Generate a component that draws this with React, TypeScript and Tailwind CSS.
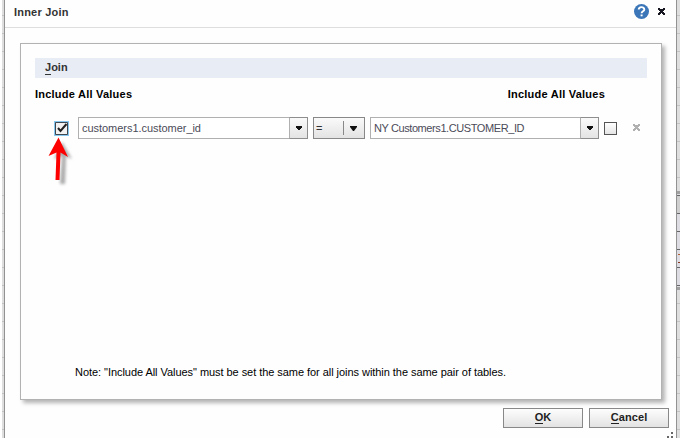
import React from "react";

const gridLines = "bg-[repeating-linear-gradient(to_bottom,#dedede_0px,#dedede_15px,#c3c3c3_15px,#c3c3c3_16px,#dedede_16px,#dedede_18px)]";

function Arrow() {
  return (
    <svg width="6" height="4" viewBox="0 0 6 4" shapeRendering="crispEdges">
      <path d="M0 0h6v2H5v1H4v1H2V3H1V2H0z" fill="#111" />
    </svg>
  );
}

function Combo({ text, width, tracking }: { text: string; width: string; tracking: string }) {
  return (
    <div className={`flex h-[22px] ${width}`}>
      <div className="flex min-w-0 flex-1 items-center border border-r-0 border-[#b0b0b0] bg-white pl-[3px] text-[#4b4b58]">
        <span className={`whitespace-nowrap ${tracking}`}>{text}</span>
      </div>
      <div className="flex w-[19px] items-center justify-center border border-[#8e8e8e] border-l-[#b0b0b0] bg-linear-to-b from-[#fafafa] to-[#e4e4e4]">
        <Arrow />
      </div>
    </div>
  );
}

function Button({ first, rest }: { first: string; rest: string }) {
  return (
    <button className="h-5 w-20 border border-[#888] bg-linear-to-b from-[#fdfdfd] to-[#e3e3e3] pb-px text-[11px] leading-[17px] font-bold tracking-[0.1px] text-[#222]">
      <span className="inline-block h-[14px] border-b border-[#222] leading-[14px]">{first}</span>
      {rest}
    </button>
  );
}

function SideStrip() {
  return (
    <div className="relative w-[3px] overflow-hidden bg-[#dedede]">
      <div className={`h-full bg-[length:100%_18px] ${gridLines}`} />
      <div className="absolute top-[191px] left-0 h-[100px] w-full bg-[#dcdce2]">
        <div className="h-[3px] bg-[#a0a0a0]" />
        <div className="mt-px h-px bg-[#666]" />
        <div className="h-[17px] bg-[#cfcfcf]" />
        <div className="h-px bg-[#666]" />
        <div className="mt-[17px] h-px bg-[#666]" />
        <div className="mt-[17px] h-px bg-[#666]" />
        <div className="mt-[4px] ml-px h-px bg-[#b06030]" />
        <div className="mt-[7px] ml-px h-px bg-[#8a3a20]" />
        <div className="mt-[4px] h-px bg-[#666]" />
        <div className="mt-[17px] h-px bg-[#666]" />
        <div className="mt-px h-[3px] bg-[#a0a0a0]" />
      </div>
    </div>
  );
}

export default function App() {
  return (
    <div className="flex h-[438px] w-[684px] overflow-hidden bg-white font-['Liberation_Sans',Arial,sans-serif] text-[11px] text-black">
      <div className={`ml-[2px] w-[2px] bg-[length:100%_18px] ${gridLines}`} />
      <main className="relative flex w-[673px] flex-col border-x border-[#929292] bg-[#fefefe]">
        <header className="flex h-7 items-center border-b border-[#dedede] pr-[11px] pb-[3px] pl-[9px]">
          <h1 className="flex-1 text-[11px] font-bold tracking-[0.2px] text-[#333]">Inner Join</h1>
          <svg className="mr-[9px] -mt-px" width="15" height="15" viewBox="0 0 15 15">
            <circle cx="7.5" cy="7.5" r="7.5" fill="#3b76b8" />
            <path d="M4.7 5.6C4.7 2.4 10.3 2.4 10.3 5.4C10.3 7.4 7.6 7.1 7.6 9.3" fill="none" stroke="#fff" strokeWidth="1.9" />
            <path d="M6.6 10.5h2v1.8h-2z" fill="#fff" />
          </svg>
          <svg className="-mt-px" width="7" height="7" viewBox="0 0 7 7">
            <path d="M0 0h2v1h3V0h2v2H6v1H5v1h1v1h1v2H5V6H4V5H3v1H2v1H0V5h1V4h1V3H1V2H0z" fill="#161620" />
          </svg>
        </header>

        <section className="mt-[15px] ml-[15px] flex h-[357px] w-[642px] flex-col border border-[#b2b2b2] bg-[#fefefe] pt-[14px] pl-[14px] shadow-[3px_3px_4px_#b4b4b4]">
          <h2 className="h-5 w-[612px] bg-[#e8ecf5] pl-[10px] text-[11px] leading-[18px] font-bold text-[#333]">
            <span className="inline-block h-[15px] border-b border-[#333] leading-[15px]">J</span>oin
          </h2>
          <div className="mt-[9px] flex h-[14px] w-[570px] justify-between leading-[14px] font-bold tracking-[0.23px]">
            <span>Include All Values</span>
            <span>Include All Values</span>
          </div>
          <div className="mt-4 flex h-[22px] items-center">
            <div className="ml-[19px] flex size-[15px] items-center justify-center bg-[#86c8f0]">
              <svg width="13" height="13" viewBox="0 0 13 13">
                <path d="M.5.5h12v12H.5z" fill="#f2f2f2" stroke="#3e4650" />
                <path d="M3 6L5.5 9L11.5 2" fill="none" stroke="#222" strokeWidth="2" />
              </svg>
            </div>
            <div className="ml-[9px]">
              <Combo text="customers1.customer_id" width="w-[230px]" tracking="tracking-[-0.04px]" />
            </div>
            <div className="ml-[5px] flex h-[22px] w-[52px] items-center border border-[#888] bg-linear-to-b from-[#fafafa] to-[#e3e3e3] pl-[2px]">
              <span className="w-[27px] text-[#333]">=</span>
              <div className="mr-[6px] h-[14px] w-px bg-[#888]" />
              <svg width="7" height="5" viewBox="0 0 7 5">
                <path d="M0 0h7v1L4 5H3L0 1z" fill="#111" />
              </svg>
            </div>
            <div className="ml-[5px]">
              <Combo text="NY Customers1.CUSTOMER_ID" width="w-[229px]" tracking="tracking-[-0.41px]" />
            </div>
            <div className="mt-px ml-[5px] size-[13px] border border-[#555] bg-linear-to-b from-[#fff] to-[#e5e5e5]" />
            <svg className="-mt-px ml-4" width="7" height="7" viewBox="0 0 7 7">
              <path d="M0 0h2v1h3V0h2v2H6v1H5v1h1v1h1v2H5V6H4V5H3v1H2v1H0V5h1V4h1V3H1V2H0z" fill="#b0b0b0" />
            </svg>
          </div>
          <p className="mt-[226px] ml-10 leading-[14px] tracking-[-0.05px] whitespace-nowrap">
            Note: "Include All Values" must be set the same for all joins within the same pair of tables.
          </p>
        </section>

        <footer className="mt-2 flex justify-end gap-[6px] pr-[7px]">
          <Button first="O" rest="K" />
          <Button first="C" rest="ancel" />
        </footer>

        <svg className="absolute top-[137px] left-[43px]" width="32" height="52" viewBox="0 0 32 52">
          <path d="M14 5L24 22L18 19L17 47H12L14 19L6 22Z" fill="#aaa" className="blur-[1.5px]" />
          <path d="M10.5 0.5L20 20L12.5 15.5L11.5 43H7.5L8.5 15.5L.5 19Z" fill="#fe0000" />
        </svg>
        <svg className="absolute right-[3px] bottom-0" width="6" height="6" viewBox="0 0 6 6">
          <path d="M4 0h2v2H4zM4 4h2v2H4zM0 4h2v2H0z" fill="#666" />
        </svg>
      </main>
      <SideStrip />
    </div>
  );
}
